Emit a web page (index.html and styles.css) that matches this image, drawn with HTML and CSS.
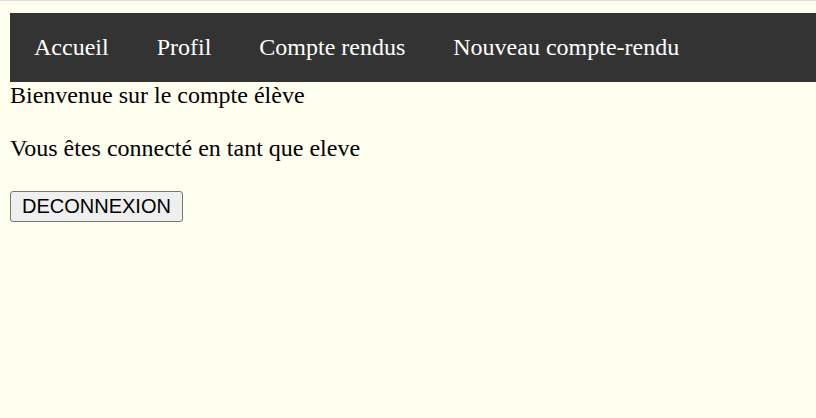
FILE: index.html
```html
<!DOCTYPE html>
<html lang="fr">
<head>
    <meta charset="UTF-8">
    <meta name="viewport" content="width=device-width, initial-scale=1.0">
    <title>Compte élève</title>
    <link rel="stylesheet" href="styles.css">
</head>
<body>
    <!-- Menu -->
    <ul class="menu">
        <li><a href="#">Accueil</a></li>
        <li><a href="#">Profil</a></li>
        <li><a href="#">Compte rendus</a></li>
        <li><a href="#">Nouveau compte-rendu</a></li>
    </ul>

    <div class="content">
        <div class="welcome">Bienvenue sur le compte élève</div>
        <p class="status">Vous êtes connecté en tant que eleve</p>
        <button class="logout">DECONNEXION</button>
    </div>
</body>
</html>
```

FILE: styles.css
```css
/* Page */
html {
    background-color: #FFFFF0;
}

body {
    margin: 0;
    padding: 12px 0 0 10px;
    border-top: 1px solid #DADCE0;
    font-family: "Liberation Serif", "Times New Roman", serif;
    font-size: 24px;
    color: #000000;
}

/* Menu */
.menu {
    list-style: none;
    margin: 0;
    padding: 0;
    display: flex;
    background-color: #333333;
}

.menu a {
    display: block;
    padding: 21px 24px;
    font-size: 24px;
    color: #FFFFFF;
    text-decoration: none;
}

/* Contenu */
.welcome {
    margin-top: 0;
}

.status {
    margin: 26px 0 0;
}

.logout {
    margin-top: 29px;
    padding: 3px 11px;
    font-family: "Liberation Sans", Arial, sans-serif;
    font-size: 20px;
    color: #000000;
    background-color: #EFEFEF;
    border: 1px solid #767676;
    border-radius: 3px;
}
```
